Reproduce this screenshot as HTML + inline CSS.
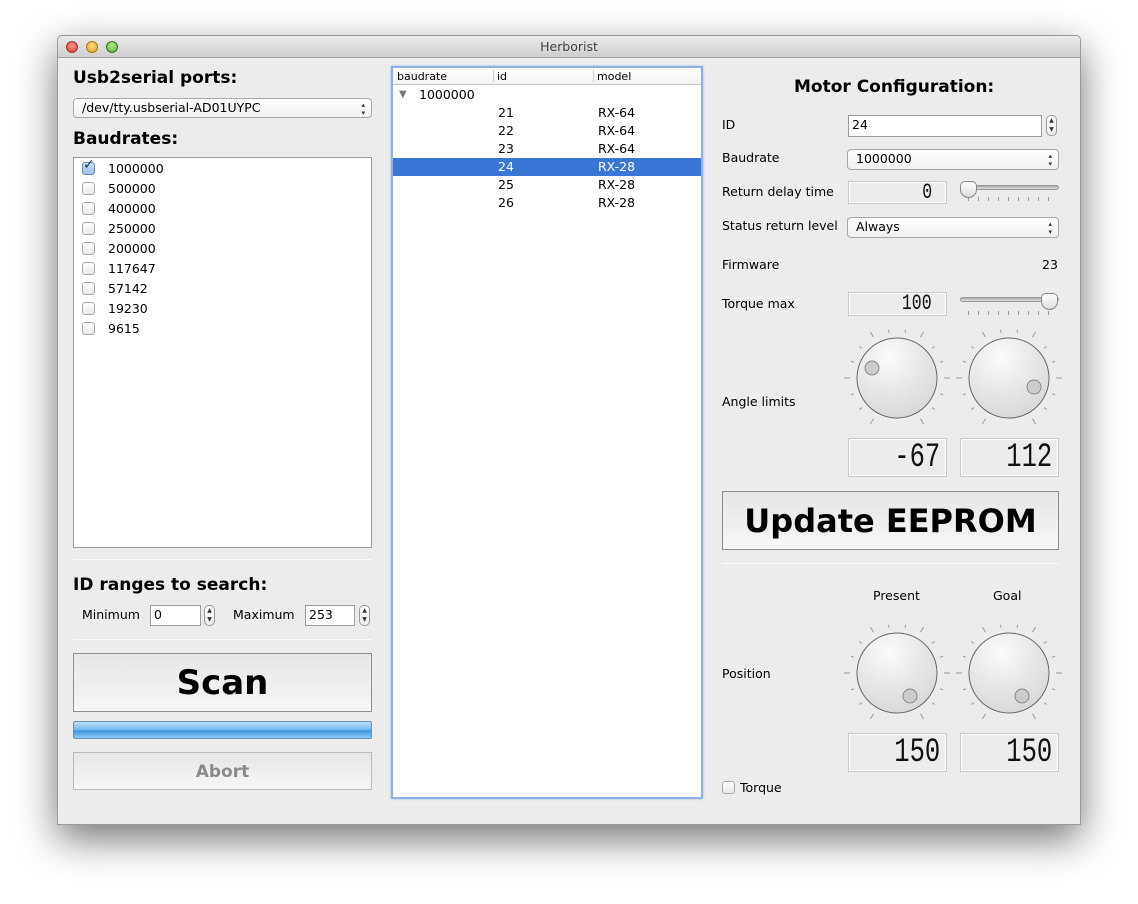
<!DOCTYPE html>
<html><head><meta charset="utf-8">
<style>
*{box-sizing:border-box;margin:0;padding:0}
body{width:1138px;height:904px;background:#fff;position:relative;overflow:hidden;font-family:"DejaVu Sans","Liberation Sans",sans-serif;font-size:12px;color:#000}
.a{position:absolute}
#win{left:57px;top:35px;width:1024px;height:790px;background:#ececec;border:1px solid #9a9a9a;border-radius:5px 5px 0 0;box-shadow:0 14px 40px rgba(0,0,0,.55)}
#tb{left:0;top:0;width:1022px;height:22px;background:linear-gradient(#e9e9e9,#cfcfcf);border-bottom:1px solid #a0a0a0;border-radius:5px 5px 0 0;text-align:center;font-size:12.5px;line-height:22px;color:#444}
.dot{width:12px;height:12px;border-radius:6px;top:5px}
h2{position:absolute;font-size:17px;font-weight:bold}
.sel{background:linear-gradient(#fff,#f0f0f0);border:1px solid #a8a8a8;border-radius:4px;padding-left:8px;font-size:12.5px;line-height:18px}
.sel:after{content:"\25B4\A\25BE";white-space:pre;position:absolute;right:6px;top:0;font-size:7px;line-height:8px;color:#333;padding-top:2px}
.cb{width:13px;height:13px;border:1px solid #aaa;border-radius:3px;background:linear-gradient(#fff,#e8e8e8)}
.lbl{font-size:12.5px}
.inp{background:#fff;border:1px solid #9c9c9c;padding-left:3px;font-size:12.5px;line-height:18px}
.spin{width:11px;height:21px;border:1px solid #999;border-radius:5px;background:linear-gradient(#fff,#ececec);font-size:6px;line-height:9px;text-align:center;color:#333}
.lcd{border:1px solid #c8c8c8;background:#ececec;box-shadow:inset 0 0 0 1px #fff;text-align:right;font-family:"Liberation Sans Narrow","Liberation Mono",monospace;font-size:34px;line-height:38px;padding-right:6px;color:#111;font-weight:normal}
.lcd span{display:inline-block;transform:scaleX(.75);transform-origin:right}
.btn{border:1px solid #8e8e8e;background:linear-gradient(#e6e6e6,#f7f7f7);text-align:center;font-weight:bold}
.hr{height:1px;background:#c9c9c9;border-bottom:1px solid #fafafa}
.row{position:absolute;left:0;width:308px;height:18px;line-height:18px;font-size:12.5px}
</style></head><body>
<svg width="0" height="0" style="position:absolute">
<defs>
<g id="ticks" stroke="#999" stroke-width="1">
<line x1="55" y1="8" x2="55" y2="2" transform="rotate(-150 55 55)"/>
<line x1="55" y1="9" x2="55" y2="6" transform="rotate(-130 55 55)"/>
<line x1="55" y1="9" x2="55" y2="6" transform="rotate(-110 55 55)"/>
<line x1="55" y1="8" x2="55" y2="2" transform="rotate(-90 55 55)"/>
<line x1="55" y1="9" x2="55" y2="6" transform="rotate(-70 55 55)"/>
<line x1="55" y1="9" x2="55" y2="6" transform="rotate(-50 55 55)"/>
<line x1="55" y1="8" x2="55" y2="2" transform="rotate(-30 55 55)"/>
<line x1="55" y1="9" x2="55" y2="6" transform="rotate(-10 55 55)"/>
<line x1="55" y1="9" x2="55" y2="6" transform="rotate(10 55 55)"/>
<line x1="55" y1="8" x2="55" y2="2" transform="rotate(30 55 55)"/>
<line x1="55" y1="9" x2="55" y2="6" transform="rotate(50 55 55)"/>
<line x1="55" y1="9" x2="55" y2="6" transform="rotate(70 55 55)"/>
<line x1="55" y1="8" x2="55" y2="2" transform="rotate(90 55 55)"/>
<line x1="55" y1="9" x2="55" y2="6" transform="rotate(110 55 55)"/>
<line x1="55" y1="9" x2="55" y2="6" transform="rotate(130 55 55)"/>
<line x1="55" y1="8" x2="55" y2="2" transform="rotate(150 55 55)"/>
</g>
<radialGradient id="kg" cx="40%" cy="25%" r="80%"><stop offset="0" stop-color="#fbfbfb"/><stop offset="1" stop-color="#d6d6d6"/></radialGradient>
<g id="knob"><use href="#ticks"/><circle cx="55" cy="55" r="40" fill="url(#kg)" stroke="#666" stroke-width="1"/></g>
</defs></svg>

<div id="win" class="a">
<div id="tb" class="a">Herborist</div>
<div class="a dot" style="left:8px;background:radial-gradient(circle at 50% 35%,#ff9b8f,#d8352a);border:1px solid #a33"></div>
<div class="a dot" style="left:28px;background:radial-gradient(circle at 50% 35%,#ffe08a,#e0a020);border:1px solid #a77a10"></div>
<div class="a dot" style="left:48px;background:radial-gradient(circle at 50% 35%,#b8f09a,#4fa52c);border:1px solid #3a7a20"></div>
</div>

<h2 style="left:73px;top:68px">Usb2serial ports:</h2>
<div class="a sel" style="left:73px;top:98px;width:299px;height:20px">/dev/tty.usbserial-AD01UYPC</div>
<h2 style="left:73px;top:129px">Baudrates:</h2>
<div class="a" style="left:73px;top:157px;width:299px;height:391px;background:#fff;border:1px solid #9c9c9c">
<div class="a cb" style="left:8px;top:4px;background:linear-gradient(#cfe0f5,#9cc0ea);border-color:#6b8bb5"></div>
<div class="a" style="left:9px;top:-1px;font-size:14px;font-weight:bold;color:#1a2a4a">✓</div>
<div class="a lbl" style="left:34px;top:3px">1000000</div>
<div class="a cb" style="left:8px;top:24px"></div><div class="a lbl" style="left:34px;top:23px">500000</div>
<div class="a cb" style="left:8px;top:44px"></div><div class="a lbl" style="left:34px;top:43px">400000</div>
<div class="a cb" style="left:8px;top:64px"></div><div class="a lbl" style="left:34px;top:63px">250000</div>
<div class="a cb" style="left:8px;top:84px"></div><div class="a lbl" style="left:34px;top:83px">200000</div>
<div class="a cb" style="left:8px;top:104px"></div><div class="a lbl" style="left:34px;top:103px">117647</div>
<div class="a cb" style="left:8px;top:124px"></div><div class="a lbl" style="left:34px;top:123px">57142</div>
<div class="a cb" style="left:8px;top:144px"></div><div class="a lbl" style="left:34px;top:143px">19230</div>
<div class="a cb" style="left:8px;top:164px"></div><div class="a lbl" style="left:34px;top:163px">9615</div>
</div>
<div class="a hr" style="left:73px;top:559px;width:299px"></div>
<h2 style="left:73px;top:575px">ID ranges to search:</h2>
<div class="a lbl" style="left:82px;top:607px">Minimum</div>
<div class="a inp" style="left:150px;top:605px;width:51px;height:21px">0</div>
<div class="a spin" style="left:204px;top:605px">▲<br>▼</div>
<div class="a lbl" style="left:233px;top:607px">Maximum</div>
<div class="a inp" style="left:305px;top:605px;width:50px;height:21px">253</div>
<div class="a spin" style="left:359px;top:605px">▲<br>▼</div>
<div class="a hr" style="left:73px;top:639px;width:299px"></div>
<div class="a btn" style="left:73px;top:653px;width:299px;height:59px;font-size:34px;line-height:59px">Scan</div>
<div class="a" style="left:73px;top:721px;width:299px;height:18px;border:1px solid #6c93b8;border-radius:2px;background:linear-gradient(#bde0fb,#70b7f0 50%,#3f95e0 55%,#8ccaf6)"></div>
<div class="a btn" style="left:73px;top:752px;width:299px;height:38px;font-size:17px;line-height:38px;color:#8a8a8a;border-color:#bbb">Abort</div>

<div class="a" style="left:391px;top:66px;width:312px;height:733px;background:#fff;border:2px solid #8db2e3;box-shadow:0 0 2px #8db2e3">
<div class="a" style="left:0;top:0;width:308px;height:17px;border-bottom:1px solid #c8c8c8;background:linear-gradient(#fff,#f2f2f2);font-size:11px;line-height:17px">
<span class="a" style="left:4px">baudrate</span><span class="a" style="left:100px;top:2px;width:1px;height:12px;background:#ccc"></span>
<span class="a" style="left:104px">id</span><span class="a" style="left:200px;top:2px;width:1px;height:12px;background:#ccc"></span>
<span class="a" style="left:204px">model</span></div>
<div class="row" style="top:18px"><span class="a" style="left:6px;color:#777;font-size:10px">▼</span><span class="a" style="left:26px">1000000</span></div>
<div class="row" style="top:36px"><span class="a" style="left:105px">21</span><span class="a" style="left:205px">RX-64</span></div>
<div class="row" style="top:54px"><span class="a" style="left:105px">22</span><span class="a" style="left:205px">RX-64</span></div>
<div class="row" style="top:72px"><span class="a" style="left:105px">23</span><span class="a" style="left:205px">RX-64</span></div>
<div class="row" style="top:90px;background:#3a76d6;color:#fff"><span class="a" style="left:105px">24</span><span class="a" style="left:205px">RX-28</span></div>
<div class="row" style="top:108px"><span class="a" style="left:105px">25</span><span class="a" style="left:205px">RX-28</span></div>
<div class="row" style="top:126px"><span class="a" style="left:105px">26</span><span class="a" style="left:205px">RX-28</span></div>
</div>

<h2 style="left:794px;top:77px">Motor Configuration:</h2>
<div class="a lbl" style="left:722px;top:117px">ID</div>
<div class="a inp" style="left:848px;top:115px;width:194px;height:22px">24</div>
<div class="a spin" style="left:1046px;top:115px">▲<br>▼</div>
<div class="a lbl" style="left:722px;top:150px">Baudrate</div>
<div class="a sel" style="left:847px;top:149px;width:212px;height:21px">1000000</div>
<div class="a lbl" style="left:722px;top:184px">Return delay time</div>
<div class="a lcd" style="left:848px;top:181px;width:99px;height:23px;font-size:22px;line-height:21px;padding-right:14px"><span>0</span></div>
<div class="a" style="left:960px;top:185px;width:99px;height:5px;border-radius:3px;background:linear-gradient(#aaa,#ddd);border:1px solid #999"></div>
<div class="a" style="left:968px;top:197px;width:85px;height:4px;background:repeating-linear-gradient(90deg,#999 0 1px,transparent 1px 10px)"></div>
<div class="a" style="left:960px;top:181px;width:17px;height:17px;background:linear-gradient(#fff,#ddd);border:1px solid #888;border-radius:5px 5px 50% 50%"></div>
<div class="a lbl" style="left:722px;top:218px">Status return level</div>
<div class="a sel" style="left:847px;top:217px;width:212px;height:21px">Always</div>
<div class="a lbl" style="left:722px;top:257px">Firmware</div>
<div class="a lbl" style="left:1042px;top:257px">23</div>
<div class="a lbl" style="left:722px;top:296px">Torque max</div>
<div class="a lcd" style="left:848px;top:292px;width:99px;height:24px;font-size:22px;line-height:22px;padding-right:14px"><span>100</span></div>
<div class="a" style="left:960px;top:297px;width:99px;height:5px;border-radius:3px;background:linear-gradient(#aaa,#ddd);border:1px solid #999"></div>
<div class="a" style="left:968px;top:311px;width:85px;height:4px;background:repeating-linear-gradient(90deg,#999 0 1px,transparent 1px 10px)"></div>
<div class="a" style="left:1041px;top:293px;width:17px;height:17px;background:linear-gradient(#fff,#ddd);border:1px solid #888;border-radius:5px 5px 50% 50%"></div>

<div class="a lbl" style="left:722px;top:394px">Angle limits</div>
<svg class="a" style="left:842px;top:323px" width="110" height="110"><use href="#knob"/><circle cx="30" cy="45" r="7" fill="#ccc" stroke="#888"/></svg>
<svg class="a" style="left:954px;top:323px" width="110" height="110"><use href="#knob"/><circle cx="80" cy="64" r="7" fill="#ccc" stroke="#888"/></svg>
<div class="a lcd" style="left:848px;top:438px;width:99px;height:39px"><span>-67</span></div>
<div class="a lcd" style="left:960px;top:438px;width:99px;height:39px"><span>112</span></div>
<div class="a btn" style="left:722px;top:491px;width:337px;height:59px;font-size:32px;line-height:59px">Update EEPROM</div>
<div class="a hr" style="left:722px;top:563px;width:337px"></div>

<div class="a lbl" style="left:873px;top:588px">Present</div>
<div class="a lbl" style="left:993px;top:588px">Goal</div>
<div class="a lbl" style="left:722px;top:666px">Position</div>
<svg class="a" style="left:842px;top:618px" width="110" height="110"><use href="#knob"/><circle cx="68" cy="78" r="7" fill="#ccc" stroke="#888"/></svg>
<svg class="a" style="left:954px;top:618px" width="110" height="110"><use href="#knob"/><circle cx="68" cy="78" r="7" fill="#ccc" stroke="#888"/></svg>
<div class="a lcd" style="left:848px;top:733px;width:99px;height:39px"><span>150</span></div>
<div class="a lcd" style="left:960px;top:733px;width:99px;height:39px"><span>150</span></div>
<div class="a cb" style="left:722px;top:781px"></div>
<div class="a lbl" style="left:740px;top:780px">Torque</div>
</body></html>
